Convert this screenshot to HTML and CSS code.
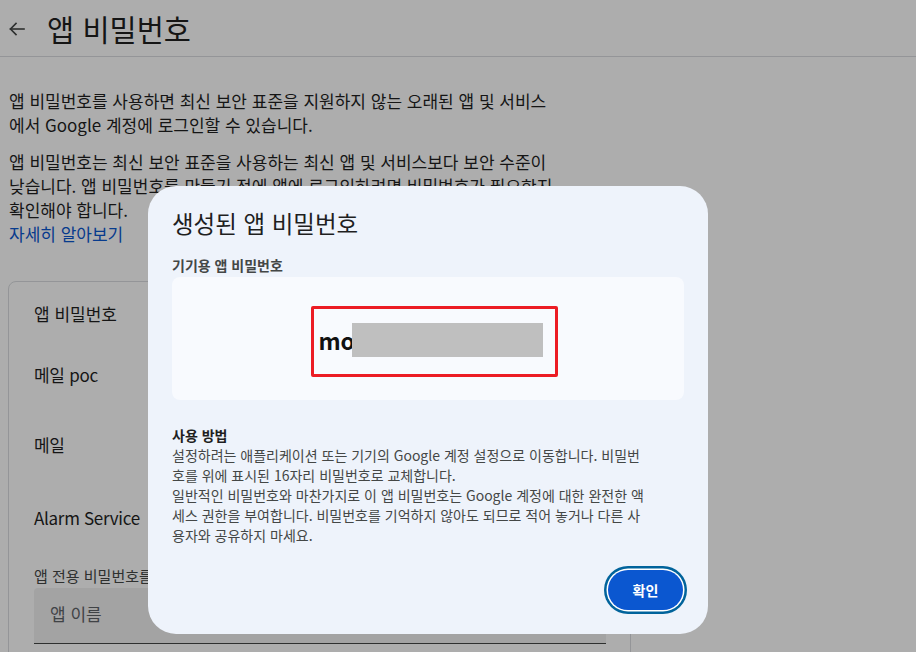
FILE: index.html
```html
<!DOCTYPE html>
<html lang="ko">
<head>
<meta charset="utf-8">
<title>앱 비밀번호</title>
<link rel="stylesheet" href="styles.css">
</head>
<body>
<div class="page">
  <header class="topbar">
    <span class="back" aria-label="뒤로">
      <svg width="18" height="18" viewBox="0 0 18 18" fill="none" stroke="#444746" stroke-width="1.6" stroke-linecap="square">
        <path d="M2.5 9H16"/>
        <path d="M8 3.5L2.5 9L8 14.5"/>
      </svg>
    </span>
    <h1 class="page-title">앱 비밀번호</h1>
  </header>
  <main class="content">
    <p class="intro">앱 비밀번호를 사용하면 최신 보안 표준을 지원하지 않는 오래된 앱 및 서비스에서 Google 계정에 로그인할 수 있습니다.</p>
    <p class="intro">앱 비밀번호는 최신 보안 표준을 사용하는 최신 앱 및 서비스보다 보안 수준이 낮습니다. 앱 비밀번호를 만들기 전에 앱에 로그인하려면 비밀번호가 필요한지 확인해야 합니다.<br><a class="link" href="#">자세히 알아보기</a></p>
    <section class="card">
      <h2 class="card-title">앱 비밀번호</h2>
      <ul class="app-list">
        <li class="app-row">메일 poc</li>
        <li class="app-row">메일</li>
        <li class="app-row app-row-last">Alarm Service</li>
      </ul>
      <div class="field-label">앱 전용 비밀번호를 만들려면 아래에 앱 이름을 입력하세요.</div>
      <div class="field">앱 이름</div>
    </section>
  </main>
</div>

<div class="scrim"></div>

<div class="dialog" role="dialog">
  <h2 class="dialog-title">생성된 앱 비밀번호</h2>
  <div class="dialog-label">기기용 앱 비밀번호</div>
  <div class="pw-box">
    <div class="pw-mark">
      <span class="pw-text">mo</span><span class="pw-redact"></span>
    </div>
  </div>
  <div class="howto">
    <div class="howto-title">사용 방법</div>
    <p class="howto-text">설정하려는 애플리케이션 또는 기기의 Google 계정 설정으로 이동합니다. 비밀번호를 위에 표시된 16자리 비밀번호로 교체합니다.</p>
    <p class="howto-text">일반적인 비밀번호와 마찬가지로 이 앱 비밀번호는 Google 계정에 대한 완전한 액세스 권한을 부여합니다. 비밀번호를 기억하지 않아도 되므로 적어 놓거나 다른 사용자와 공유하지 마세요.</p>
  </div>
  <div class="actions">
    <button class="btn-confirm" type="button">확인</button>
  </div>
</div>
</body>
</html>
```

FILE: styles.css
```css
* { box-sizing: border-box; }

html, body {
  margin: 0;
  padding: 0;
  background: #ffffff;
  font-family: "Noto Sans CJK KR", "Noto Sans", sans-serif;
  color: #1f1f1f;
  overflow: hidden;
}

.page {
  width: 916px;
  height: 652px;
}

.topbar {
  height: 57px;
  border-bottom: 1px solid #dadce0;
  display: flex;
  align-items: center;
  padding-left: 8px;
}

.back {
  display: flex;
  width: 18px;
  height: 18px;
  margin-right: 21px;
  margin-top: 2px;
}

.page-title {
  margin: 0;
  font-size: 29.5px;
  font-weight: 400;
  line-height: 36px;
  color: #1f1f1f;
}

.content {
  padding: 32px 0 0 9px;
}

.intro {
  margin: 0 0 13px;
  max-width: 548px;
  font-size: 17px;
  line-height: 24px;
  color: #1f1f1f;
}

.link {
  color: #0b57d0;
  text-decoration: none;
}

.card {
  margin: 35px 0 0 -1px;
  width: 623px;
  border: 1px solid #dadce0;
  border-radius: 8px;
  padding: 20px 24px 0 25px;
  height: 400px;
}

.card-title {
  margin: 0;
  font-size: 17px;
  font-weight: 400;
  line-height: 24px;
}

.app-list {
  list-style: none;
  margin: 13px 0 0;
  padding: 0;
}

.app-row {
  height: 70px;
  display: flex;
  align-items: center;
  font-size: 17px;
  letter-spacing: -0.3px;
}

.app-row-last {
  height: 76px;
}

.field-label {
  margin-top: 11px;
  font-size: 15px;
  line-height: 20px;
  color: #444746;
  white-space: nowrap;
}

.field {
  margin-top: 2px;
  height: 56px;
  background: #f0f0f0;
  border-radius: 4px 4px 0 0;
  border-bottom: 1px solid #444746;
  padding: 14px 16px 0;
  font-size: 17px;
  line-height: 24px;
  color: #5f6368;
}

.scrim {
  position: fixed;
  inset: 0;
  background: rgba(0, 0, 0, 0.32);
}

.dialog {
  position: absolute;
  left: 148px;
  top: 186px;
  width: 560px;
  background: #eef3fb;
  border-radius: 28px;
  padding: 22px 24px 24px;
}

.dialog-title {
  margin: 0;
  font-size: 23.5px;
  font-weight: 400;
  line-height: 30px;
  color: #1f1f1f;
}

.dialog-label {
  margin-top: 17px;
  font-size: 14px;
  font-weight: 700;
  line-height: 20px;
  color: #444746;
}

.pw-box {
  margin-top: 2px;
  height: 123px;
  background: #f8fafe;
  border-radius: 8px;
  display: flex;
  justify-content: center;
  align-items: center;
  padding: 6px 0 0 12px;
}

.pw-mark {
  display: flex;
  align-items: center;
  width: 247px;
  border: 3px solid #ec1c24;
  border-radius: 2px;
  padding: 14px 11px 17px 5px;
}

.pw-text {
  white-space: nowrap;
  font-size: 23px;
  font-weight: 700;
  line-height: 34px;
  color: #111111;
  letter-spacing: -0.2px;
}

.pw-redact {
  flex: none;
  width: 191px;
  height: 34px;
  margin-left: -3px;
  background: #bfbfbf;
}

.howto {
  margin-top: 25px;
  max-width: 472px;
}

.howto-title {
  font-size: 14px;
  font-weight: 700;
  line-height: 20px;
  color: #1f1f1f;
}

.howto-text {
  margin: 0;
  font-size: 14px;
  line-height: 20px;
  color: #444746;
}

.actions {
  margin-top: 25px;
  display: flex;
  justify-content: flex-end;
  padding-right: 1px;
}

.btn-confirm {
  width: 75px;
  height: 40px;
  border: none;
  border-radius: 20px;
  background: #0b57d0;
  color: #ffffff;
  font-family: "Noto Sans CJK KR", sans-serif;
  font-size: 14px;
  font-weight: 700;
  box-shadow: 0 0 0 1.5px #ffffff, 0 0 0 4px #00639b;
  cursor: pointer;
}
```
